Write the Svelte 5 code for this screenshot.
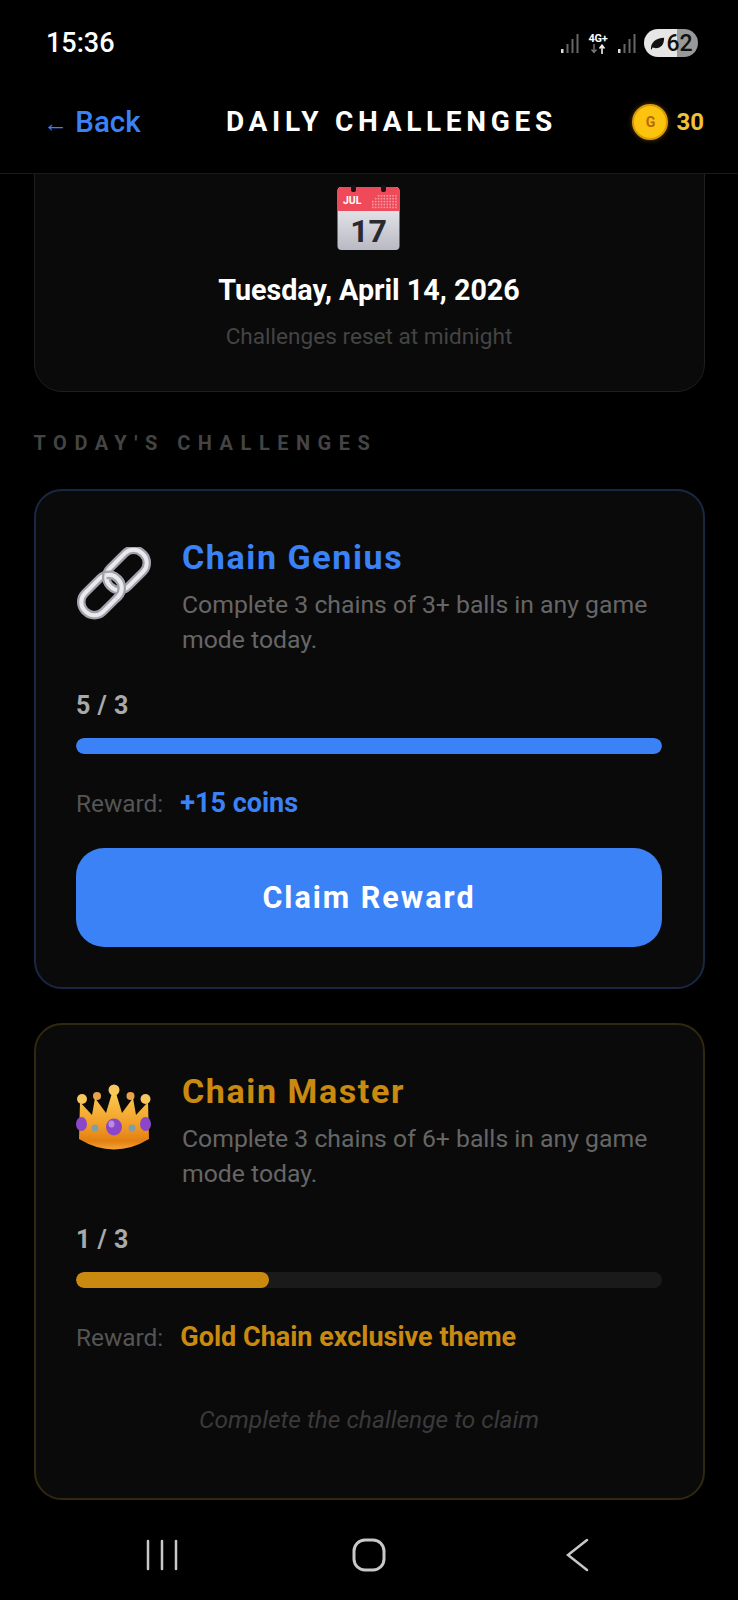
<script>
  let challenges = [
    {
      name: "Chain Genius",
      desc: "Complete 3 chains of 3+ balls in any game mode today.",
      progress: "5 / 3",
      pct: 100,
      reward: "+15 coins",
      kind: "blue",
      done: true
    },
    {
      name: "Chain Master",
      desc: "Complete 3 chains of 6+ balls in any game mode today.",
      progress: "1 / 3",
      pct: 33,
      reward: "Gold Chain exclusive theme",
      kind: "gold",
      done: false
    }
  ];

  // dots on the calendar header, fewer towards the top
  const calDots = [];
  for (let r = 0; r < 5; r++) {
    for (let c = 0; c < 9; c++) {
      if (r + c >= 2) calDots.push([36 + c * 2.9, 10 + r * 2.9]);
    }
  }
</script>

<div class="page">
  <div class="status">
    <span class="time">15:36</span>
    <div class="status-right">
      <svg width="20" height="22" viewBox="0 0 20 22">
        <rect x="1" y="17" width="2.5" height="4" fill="#ddd" />
        <rect x="6.5" y="12" width="2" height="9" fill="#666" />
        <rect x="11.5" y="7" width="2" height="14" fill="#666" />
        <rect x="16.5" y="2" width="2" height="19" fill="#666" />
      </svg>
      <div class="net">
        <span>4G+</span>
        <svg width="18" height="10" viewBox="0 0 18 10">
          <path d="M5 0v8M2.5 5.5 5 8.5l2.5-3" stroke="#777" stroke-width="1.4" fill="none" />
          <path d="M13 10V1.5M10.5 4.5 13 1.2l2.5 3.3" stroke="#eee" stroke-width="1.6" fill="none" />
        </svg>
      </div>
      <svg width="20" height="22" viewBox="0 0 20 22">
        <rect x="1" y="17" width="2.5" height="4" fill="#ddd" />
        <rect x="6.5" y="12" width="2" height="9" fill="#666" />
        <rect x="11.5" y="7" width="2" height="14" fill="#666" />
        <rect x="16.5" y="2" width="2" height="19" fill="#666" />
      </svg>
      <div class="battery">
        <svg width="17" height="17" viewBox="0 0 18 18">
          <path d="M2 15C2 8 7 3.500 16 3c0 7-3 11-9 11-1.500 0-2.500-.5-3-1l-1.500 2.500z" fill="#111" />
        </svg>
        <span>62</span>
      </div>
    </div>
  </div>

  <header class="topbar">
    <span class="back"><span class="arrow">←</span> Back</span>
    <span class="title">DAILY CHALLENGES</span>
    <div class="coins">
      <span class="coin">G</span>
      <span class="coin-count">30</span>
    </div>
  </header>

  <main class="scroll">
    <section class="date-card">
      <svg class="calendar" width="66" height="66" viewBox="0 0 66 66">
        <defs>
          <linearGradient id="calBody" x1="0" y1="0" x2="0" y2="1">
            <stop offset="0" stop-color="#fafafc" />
            <stop offset="1" stop-color="#b9b9c4" />
          </linearGradient>
        </defs>
        <rect x="1.500" y="2" width="62" height="63" rx="4" fill="url(#calBody)" />
        <path d="M1.500 26V6a4 4 0 0 1 4-4h54a4 4 0 0 1 4 4v20z" fill="#ee4a59" />
        <rect x="15" y="0" width="5" height="7" rx="2" fill="#1a1015" />
        <rect x="45" y="0" width="5" height="7" rx="2" fill="#1a1015" />
        <text x="7" y="19" class="cal-month">JUL</text>
        <g fill="#f99aa3">
          {#each calDots as d}
            <rect x={d[0]} y={d[1]} width="1.6" height="1.6" />
          {/each}
        </g>
        <text x="32.500" y="57" class="cal-day">17</text>
      </svg>
      <h2 class="date">Tuesday, April 14, 2026</h2>
      <p class="reset">Challenges reset at midnight</p>
    </section>

    <h3 class="section-label">TODAY'S CHALLENGES</h3>

    {#each challenges as c}
      <section class="card {c.kind}">
        <div class="card-top">
          <div class="emoji">
            {#if c.kind === "blue"}
              <svg width="76" height="76" viewBox="0 0 76 76">
                <g fill="none">
                  <g transform="translate(25.500 48) rotate(-45)">
                    <rect x="-23" y="-13" width="46" height="26" rx="12.500" stroke="#a2a2ac" stroke-width="8.500" />
                    <rect x="-23" y="-13" width="46" height="26" rx="12.500" stroke="#eaeaee" stroke-width="4" />
                  </g>
                  <g transform="translate(50.500 23) rotate(-45)">
                    <rect x="-23" y="-13" width="46" height="26" rx="12.500" stroke="#a2a2ac" stroke-width="8.500" />
                    <rect x="-23" y="-13" width="46" height="26" rx="12.500" stroke="#eaeaee" stroke-width="4" />
                  </g>
                  <!-- lower link passes back over the upper one -->
                  <g transform="translate(25.500 48) rotate(-45)">
                    <path d="M8 13h2.500a12.500 12.500 0 0 0 12.500-12.500v-1a12.500 12.500 0 0 0-6-10.500" stroke="#a2a2ac" stroke-width="8.500" />
                    <path d="M8 13h2.500a12.500 12.500 0 0 0 12.500-12.500v-1a12.500 12.500 0 0 0-6-10.500" stroke="#eaeaee" stroke-width="4" />
                  </g>
                </g>
              </svg>
            {:else}
              <svg class="crown" width="76" height="66" viewBox="0 0 76 66">
                <defs>
                  <linearGradient id="crownGrad" x1="0" y1="0" x2="0" y2="1">
                    <stop offset="0" stop-color="#fbcb50" />
                    <stop offset="0.6" stop-color="#f09a24" />
                    <stop offset="0.85" stop-color="#e27f12" />
                    <stop offset="1" stop-color="#f3a636" />
                  </linearGradient>
                </defs>
                <circle cx="38" cy="6" r="5.500" fill="#f6c75e" />
                <circle cx="6" cy="15" r="5" fill="#f6c75e" />
                <circle cx="69.500" cy="15" r="5" fill="#f6c75e" />
                <circle cx="21" cy="12" r="4" fill="#e9a24a" />
                <circle cx="54.500" cy="12" r="4" fill="#e9a24a" />
                <path d="M3 55 4 18 16 31 19 14 30 29 36 9h4l6 20 11-15 3 17 12-13 1 37Q38 76 3 55z" fill="url(#crownGrad)" />
                <ellipse cx="38" cy="43" rx="8" ry="8.500" fill="#8a48c8" />
                <ellipse cx="35.500" cy="40" rx="3" ry="3.500" fill="#b98be6" />
                <ellipse cx="5.500" cy="40" rx="5.500" ry="7" fill="#8a48c8" />
                <ellipse cx="69.500" cy="40" rx="5.500" ry="7" fill="#8a48c8" />
                <circle cx="19" cy="44" r="3.500" fill="#7f9ea8" />
                <circle cx="56" cy="44" r="3.500" fill="#7f9ea8" />
              </svg>
            {/if}
          </div>
          <div class="card-text">
            <h4 class="name">{c.name}</h4>
            <p class="desc">{c.desc}</p>
          </div>
        </div>
        <div class="progress-label">{c.progress}</div>
        <div class="track"><div class="fill" style="width: {c.pct}%"></div></div>
        <div class="reward">
          <span class="reward-label">Reward:</span>
          <span class="reward-value">{c.reward}</span>
        </div>
        {#if c.done}
          <button class="claim">Claim Reward</button>
        {:else}
          <p class="hint">Complete the challenge to claim</p>
        {/if}
      </section>
    {/each}
  </main>

  <nav class="navbar">
    <svg width="32" height="32" viewBox="0 0 32 32" stroke="#c8c8c8" stroke-width="2.500" stroke-linecap="round">
      <path d="M2 2v28M16 2v28M30 2v28" />
    </svg>
    <svg class="home" width="34" height="34" viewBox="0 0 34 34">
      <rect x="2" y="2" width="30" height="30" rx="11" fill="none" stroke="#c8c8c8" stroke-width="3" />
    </svg>
    <svg width="24" height="34" viewBox="0 0 24 34">
      <path d="M21 2 2 17l19 15" fill="none" stroke="#c8c8c8" stroke-width="2.500" stroke-linecap="round" />
    </svg>
  </nav>
</div>

<style>
  :global(body) {
    background: #000;
  }

  .page {
    width: 738px;
    height: 1600px;
    display: flex;
    flex-direction: column;
    overflow: hidden;
    background: #000;
    color: #fff;
    font-family: Roboto, "Liberation Sans", sans-serif;
  }

  .status {
    height: 84px;
    flex: none;
    box-sizing: border-box;
    padding: 26px 40px 0 46px;
    display: flex;
    justify-content: space-between;
    align-items: flex-start;
  }

  .time {
    font-size: 27px;
    font-weight: 500;
    line-height: 34px;
  }

  .status-right {
    display: flex;
    align-items: center;
    gap: 7.500px;
    height: 34px;
  }

  .net {
    display: flex;
    flex-direction: column;
    align-items: center;
    width: 22px;
    line-height: 11px;
  }

  .net span {
    font-size: 11px;
    font-weight: 700;
    letter-spacing: -0.3px;
  }

  .battery {
    width: 54px;
    height: 28px;
    border-radius: 14px;
    display: flex;
    align-items: center;
    justify-content: center;
    background: linear-gradient(90deg, #e6e6e6 0 62%, #999 62% 100%);
    color: #111;
    font-size: 23px;
    font-weight: 500;
  }

  .topbar {
    height: 90px;
    flex: none;
    box-sizing: border-box;
    padding: 0 34px 14px 43px;
    display: flex;
    align-items: center;
    border-bottom: 1px solid #1a1a1a;
  }

  .back {
    font-size: 29.500px;
    font-weight: 500;
    color: #3b82f6;
    width: 183px;
  }

  .arrow {
    font-size: 25px;
  }

  .title {
    font-size: 28px;
    font-weight: 700;
    letter-spacing: 4.700px;
  }

  .coins {
    margin-left: auto;
    display: flex;
    align-items: center;
    gap: 8px;
  }

  .coin {
    width: 36px;
    height: 36px;
    border-radius: 50%;
    background: #fcc30f;
    border: 2px solid #d99a06;
    box-shadow: 0 0 5px rgba(251, 191, 36, 0.35);
    box-sizing: border-box;
    color: #b06a0a;
    font-size: 14px;
    font-weight: 700;
    display: flex;
    align-items: center;
    justify-content: center;
  }

  .coin-count {
    font-size: 24px;
    font-weight: 700;
    color: #f0c23a;
  }

  .scroll {
    flex: 1;
    min-height: 0;
    overflow: hidden;
    padding: 0 33.500px;
  }

  .date-card {
    margin-top: -60px;
    height: 278px;
    box-sizing: border-box;
    padding-top: 70px;
    text-align: center;
    background: #0a0a0a;
    border: 1px solid #1f1f1f;
    border-radius: 28px;
  }

  .calendar {
    display: block;
    margin: 0 auto;
  }

  .cal-month {
    font-size: 10.500px;
    font-weight: 700;
    fill: #fff;
  }

  .cal-day {
    font-size: 32px;
    font-weight: 700;
    fill: #2a2a30;
    text-anchor: middle;
  }

  .date {
    margin: 21px 0 0;
    font-size: 28.700px;
    font-weight: 700;
    line-height: 36px;
  }

  .reset {
    margin: 13px 0 0;
    font-size: 22.600px;
    line-height: 32px;
    color: #444;
  }

  .section-label {
    margin: 37px 0 0;
    height: 60px;
    font-size: 20px;
    font-weight: 700;
    line-height: 28px;
    letter-spacing: 7.500px;
    color: #444;
  }

  .card {
    box-sizing: border-box;
    margin-bottom: 34px;
    padding: 44px 40.500px 40px;
    background: #0a0a0a;
    border: 2px solid;
    border-radius: 28px;
  }

  .card.blue {
    border-color: #1a2743;
    --accent: #3b82f6;
  }

  .card.gold {
    border-color: #32280f;
    --accent: #ca8a10;
  }

  .card-top {
    display: flex;
    gap: 30px;
  }

  .emoji {
    width: 76px;
    flex: none;
    padding-top: 12px;
  }

  .emoji svg {
    display: block;
  }

  .emoji .crown {
    margin-top: 3px;
  }

  .name {
    margin: 0;
    font-size: 34px;
    font-weight: 700;
    line-height: 44px;
    letter-spacing: 1.600px;
    color: var(--accent);
  }

  .desc {
    margin: 8px 0 0;
    font-size: 24.750px;
    line-height: 35px;
    color: #666;
  }

  .progress-label {
    margin-top: 31px;
    font-size: 25px;
    font-weight: 700;
    line-height: 36px;
    letter-spacing: 0.500px;
    color: #aaa;
  }

  .track {
    margin-top: 14px;
    height: 16px;
    border-radius: 8px;
    background: #1a1a1a;
    overflow: hidden;
  }

  .fill {
    height: 100%;
    border-radius: 8px;
    background: var(--accent);
  }

  .reward {
    margin-top: 33px;
    display: flex;
    gap: 17px;
    align-items: baseline;
    line-height: 32px;
  }

  .reward-label {
    font-size: 24.400px;
    color: #555;
  }

  .reward-value {
    font-size: 27px;
    font-weight: 700;
    color: var(--accent);
  }

  .claim {
    display: block;
    width: 100%;
    height: 99px;
    margin-top: 28px;
    border: none;
    border-radius: 28px;
    background: #3b82f6;
    color: #fff;
    font-family: inherit;
    font-size: 30.500px;
    font-weight: 700;
    letter-spacing: 2px;
  }

  .hint {
    margin: 50px 0 22px;
    text-align: center;
    font-size: 24.500px;
    font-style: italic;
    line-height: 32px;
    color: #3a3a3a;
  }

  .navbar {
    height: 100px;
    flex: none;
    padding: 9px 0 0 146px;
    display: flex;
    align-items: center;
    background: #000;
    box-sizing: border-box;
  }

  .home {
    margin: 0 180px 0 174px;
  }
</style>
